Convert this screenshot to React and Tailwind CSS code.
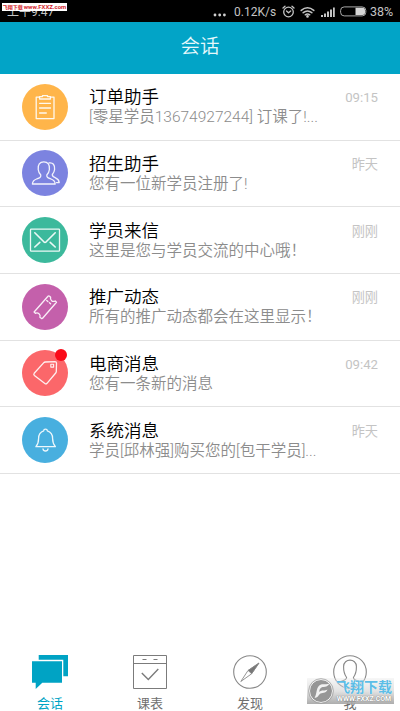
import React from "react";
import clsx from "clsx";

const stroke = {
  fill: "none",
  stroke: "currentColor",
  strokeWidth: 1.3,
  strokeLinecap: "round",
  strokeLinejoin: "round",
};

function ClipboardIcon() {
  return (
    <svg viewBox="0 0 46 46" className="size-full" {...stroke}>
      <path d="M17.3 13.2H14.2V34.6H32V13.2H28.7" />
      <path d="M17.6 12.6H20.5V11.6H25.5V12.6H28.4V15H17.6Z" />
      <path d="M17.6 19.3H28.5M17.6 24H28.5M17.6 29H24.3" />
    </svg>
  );
}

function PeopleIcon() {
  return (
    <svg viewBox="0 0 46 46" className="size-full" {...stroke}>
      <path d="M18.8 25C16.7 23 16.4 21.2 16.2 19.5C15.6 14.5 17.8 11.9 21.8 11.9C25.8 11.9 28 14.5 27.4 19.5C27.2 21.2 26.9 23 24.8 25C24.6 27.6 26 28 29 29C32 30 33 31 33.2 34H10.4C10.6 31 11.6 30 14.6 29C17.6 28 19 27.6 18.8 25Z" />
      <path d="M27 12.9C31 12.2 33 15 32.6 19.5C32.4 21.3 32 22.6 30.3 24.5C30.2 26.6 31.5 27 33.5 27.8C36.3 28.9 37 30 37.2 32.6H34.5" />
    </svg>
  );
}

function MailIcon() {
  return (
    <svg viewBox="0 0 46 46" className="size-full" {...stroke}>
      <rect x="8.5" y="12.2" width="29" height="22" rx="0.8" />
      <path strokeWidth="1.6" d="M12.8 15.8L21.8 24.8Q23 25.8 24.2 24.8L33.2 15.8M12.8 30L17.8 25.4M33.2 30L28.2 25.4" />
    </svg>
  );
}

function TicketIcon() {
  return (
    <svg viewBox="0 0 46 46" className="size-full" {...stroke}>
      <path d="M12.1 28L26 12.3Q26.7 11.5 27.6 12.2L28.6 13.2Q28 15.6 29.6 16.7Q31.2 18 33.2 17L34.5 18.2L20.6 34.2Q20 35 19.3 34.3L17.9 33.2Q18.7 31.1 17 29.7Q15.3 28.4 13.4 29.3Z" />
      <path strokeDasharray="1.6 2" d="M24.7 16.4L29.6 20.7" />
    </svg>
  );
}

function TagIcon() {
  return (
    <svg viewBox="0 0 46 46" className="size-full" {...stroke}>
      <path d="M23.3 12L33 11.6Q34.4 11.6 34.5 13L34.3 21.5Q34.3 22.3 33.7 23L25 33.3Q24 34.4 22.9 33.5L12.4 25.4Q11.3 24.4 12.2 23.3L21.6 12.9Q22.3 12.1 23.3 12Z" />
      <rect x="28.8" y="14.3" width="2.8" height="2.8" strokeWidth="1.1" />
    </svg>
  );
}

function BellIcon() {
  return (
    <svg viewBox="0 0 46 46" className="size-full" {...stroke}>
      <path d="M21.7 13.8C21.7 11.6 25.3 11.6 25.3 13.8C29.5 15 30.6 18 30.6 21.5C30.6 26 31.3 27.3 33.4 29.7H13.9C16 27.3 16.6 26 16.6 21.5C16.6 18 17.6 15 21.7 13.8Z" />
      <path d="M21 31.8C21.4 34.7 25.6 34.7 26 31.8" />
    </svg>
  );
}

const messages = [
  { title: "订单助手", text: "[零星学员13674927244] 订课了!...", time: "09:15", color: "bg-[#ffb54a]", icon: ClipboardIcon },
  { title: "招生助手", text: "您有一位新学员注册了!", time: "昨天", color: "bg-[#7c83e0]", icon: PeopleIcon },
  { title: "学员来信", text: "这里是您与学员交流的中心哦！", time: "刚刚", color: "bg-[#3cb99c]", icon: MailIcon },
  { title: "推广动态", text: "所有的推广动态都会在这里显示！", time: "刚刚", color: "bg-[#c460ab]", icon: TicketIcon },
  { title: "电商消息", text: "您有一条新的消息", time: "09:42", color: "bg-[#fb676a]", icon: TagIcon, unread: true },
  { title: "系统消息", text: "学员[邱林强]购买您的[包干学员]...", time: "昨天", color: "bg-[#48afdf]", icon: BellIcon },
];

function StatusBar() {
  return (
    <div className="relative flex h-[22px] items-center justify-between bg-black pl-[7px] pr-[6px] pt-[1px] text-[12.5px] leading-none text-[#c4c4c4]">
      <span className="text-[12px]">上午9:47</span>
      <div className="flex items-center">
        <svg viewBox="0 0 14 4" className="mr-[7px] mt-[6px] h-[4px] w-[14px]" fill="#d0d0d0">
          <circle cx="2" cy="2" r="1.4" />
          <circle cx="6.7" cy="2" r="1.4" />
          <circle cx="11.4" cy="2" r="1.4" />
        </svg>
        <span className="w-[43px] whitespace-nowrap text-[12px]">0.12K/s</span>
        <svg viewBox="0 0 13 13" className="ml-[5px] size-[13px]" {...stroke}>
          <circle cx="6.5" cy="7" r="4.8" />
          <path d="M1 3L3 1.2M12 3L10 1.2M4.5 6L6.5 7.8L8.7 6" />
        </svg>
        <svg viewBox="0 0 15 12" className="ml-[5px] h-[12px] w-[15px]" {...stroke} strokeWidth="1.5">
          <path d="M1.2 4.4Q7.5 -0.8 13.8 4.4M3.2 6.7Q7.5 3.2 11.8 6.7M5.3 8.8Q7.5 7.2 9.7 8.8" />
          <circle cx="7.5" cy="10.4" r="0.6" fill="currentColor" />
        </svg>
        <svg viewBox="0 0 14 10" className="ml-[6px] mt-[1px] h-[10px] w-[14px]" fill="currentColor">
          <path d="M0 8h2v2H0zM3 6.5h2V10H3zM6 4.5h2V10H6zM9 2.5h2V10H9zM12 .5h1.8V10H12z" />
        </svg>
        <svg viewBox="0 0 27 11" className="ml-[5px] h-[11px] w-[27px]">
          <rect x="0.6" y="0.9" width="25.2" height="9" rx="3.6" fill="none" stroke="#a8a8a8" />
          <path d="M15.5 1.8H22.5Q25 1.8 25 4.3V6.5Q25 9 22.5 9H15.5Z" fill="#d6d6d6" />
        </svg>
        <span className="ml-[3px] w-[24px] whitespace-nowrap pt-[1px]">38%</span>
      </div>
      <div className="absolute left-[2px] top-[3px] flex h-[8px] w-[65px] items-center justify-center gap-[1px] whitespace-nowrap bg-white font-bold text-[#d51d2c]">
        <span className="text-[5px] leading-none">飞翔下载</span>
        <span className="text-[6px] leading-none">www.FXXZ.com</span>
      </div>
    </div>
  );
}

function MessageRow({ item }) {
  const Icon = item.icon;
  return (
    <li className="flex h-[66.65px] items-center border-b border-[#e2e2e2] pl-[22px] pr-[22px]">
      <div className={clsx("relative size-[46px] shrink-0 rounded-full text-white/90", item.color)}>
        <Icon />
        {item.unread && (
          <span className="absolute -top-[1px] right-[1px] h-[11.5px] w-[12.5px] rounded-full bg-[#fa0a18]" />
        )}
      </div>
      <div className="ml-[21px] min-w-0 flex-1 pt-[2px]">
        <div className="mb-px flex items-center justify-between">
          <h2 className="text-[17.5px] font-[350] leading-[19px] text-black">{item.title}</h2>
          <span className="text-[13.2px] leading-[19px] text-[#c4c4c4]">{item.time}</span>
        </div>
        <p className="whitespace-nowrap text-[15.5px] font-[350] leading-[19px] text-[#8c8c8c]">{item.text}</p>
      </div>
    </li>
  );
}

function TabBar() {
  return (
    <nav className="mt-auto grid h-[60px] grid-cols-4 text-[13px] leading-[18px] text-[#6f6f6f]">
      <div className="flex flex-col items-center text-[#00a3c4]">
        <svg viewBox="0 0 38 38" className="h-[38px] w-[38px] shrink-0" fill="currentColor">
          <path d="M7.7 4H37V25.3H32.3V8.7H7.7Z" />
          <path d="M1 10.3H31V31.7H11.3L4.7 37.9V31.7H1Z" />
        </svg>
        <span className="mt-[6px]">会话</span>
      </div>
      <div className="flex flex-col items-center">
        <svg viewBox="0 0 34 38" className="h-[38px] w-[34px] shrink-0" fill="none" stroke="#7b7b7b" strokeWidth="1">
          <path d="M.5 4.5H33.5V37.5H.5ZM.5 12.5H33.5M9.5 8.5H13.5M20.5 8.5H24.5" />
          <path d="M8.8 22L15.3 28.5L25.3 18" strokeWidth="1.4" />
        </svg>
        <span className="mt-[6px]">课表</span>
      </div>
      <div className="flex flex-col items-center">
        <svg viewBox="0 0 34 38" className="h-[38px] w-[34px] shrink-0" fill="none" stroke="#888" strokeWidth="1.1">
          <circle cx="17" cy="21" r="16.3" />
          <path d="M26 12L18.6 22.8L7.8 30.5L15 19.5Z" strokeWidth="0.9" />
          <path d="M26 12L18.6 22.8L15 19.5Z" fill="#777" strokeWidth="0.5" />
        </svg>
        <span className="mt-[6px]">发现</span>
      </div>
      <div className="relative flex flex-col items-center">
        <svg viewBox="0 0 34 38" className="h-[38px] w-[34px] shrink-0" fill="none" stroke="#888" strokeWidth="1.1">
          <circle cx="17" cy="21" r="16.3" />
          <path d="M4.5 32C8 29.5 13.5 30 13.6 26.5C11.4 23.5 10.5 20 10.6 15.5C10.6 7 23.4 7 23.4 15.5C23.5 20 22.6 23.5 20.4 26.5C20.5 30 26 29.5 29.5 32" />
        </svg>
        <span className="mt-[6px]">我</span>
        <Watermark />
      </div>
    </nav>
  );
}

function Watermark() {
  return (
    <div className="absolute left-[7px] top-[27px] flex h-[26px] w-[87px] items-center bg-gradient-to-b from-[#e4e4e4]/30 via-[#d0d0d0]/60 to-[#a4a4a4]/90">
      <svg viewBox="0 0 28 28" className="ml-[1px] size-[26px] shrink-0">
        <circle cx="14" cy="14" r="12.4" fill="#969696" stroke="#fff" strokeWidth="1" />
        <circle cx="14" cy="14" r="13.3" fill="none" stroke="#999" strokeWidth="0.8" />
        <path d="M7 21C10 18 8 9 14 7C17 6 20 7.5 23 6C21 11 16 8.5 13.5 11C12 12.5 12.5 14 12 15C15 12.5 18 14.5 21 12.5C19 17.5 15 15.5 12.5 17.5C11 19 10 22 7 21Z" fill="#f1f1f1" />
      </svg>
      <div className="flex flex-1 flex-col items-center whitespace-nowrap">
        <span className="text-[14px] font-bold leading-[16px] text-[#5cbde6] [text-shadow:0_0_1px_#fff]">飞翔下载</span>
        <span className="text-[7px] font-bold leading-[8px] text-white [text-shadow:0_0_1px_#555]">WWW.FXXZ.COM</span>
      </div>
    </div>
  );
}

export default function App() {
  return (
    <div className="flex h-[711px] w-[400px] flex-col overflow-hidden bg-white font-[Roboto,'Noto_Sans_CJK_SC',sans-serif]">
      <StatusBar />
      <header className="flex h-[52px] items-center justify-center bg-[#02a4c7] pb-[2px]">
        <h1 className="text-[19.5px] font-[350] leading-none text-[#e6f8fb]">会话</h1>
      </header>
      <ul>
        {messages.map((item) => (
          <MessageRow key={item.title} item={item} />
        ))}
      </ul>
      <TabBar />
    </div>
  );
}
